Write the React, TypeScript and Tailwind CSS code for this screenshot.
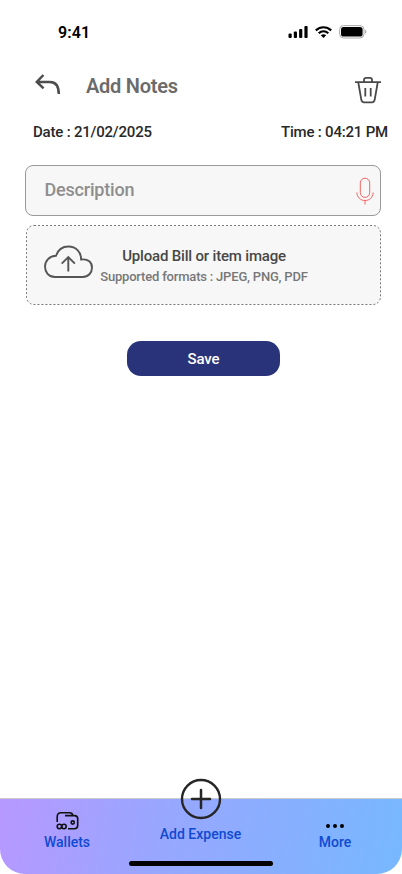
import React from "react";

function StatusBar() {
  return (
    <div className="flex h-16 items-center justify-between pl-[58px] pr-[35px] text-black">
      <span className="pt-px text-base font-semibold leading-5 tracking-[0.15px]">9:41</span>
      <div className="flex items-center">
        <svg width="20" height="14" viewBox="0 0 20 14" fill="currentColor">
          <rect x="0.5" y="8.5" width="3.2" height="4.5" rx="1" />
          <rect x="5.8" y="6.5" width="3.2" height="6.5" rx="1" />
          <rect x="11.1" y="4" width="3.2" height="9" rx="1" />
          <rect x="16.4" y="1" width="3.2" height="12" rx="1" />
        </svg>
        <svg className="ml-[7px]" width="17" height="13" viewBox="0 0 17 13" fill="none" stroke="currentColor" strokeWidth="2.2">
          <path d="M.8 4.4c4.5-4.2 10.9-4.2 15.4 0" />
          <path d="M3.7 7.3c2.8-2.6 6.8-2.6 9.6 0" />
          <path d="M5.8 9.2c1.7-1.3 3.7-1.3 5.4 0L8.5 12z" fill="currentColor" stroke="none" />
        </svg>
        <svg className="ml-[7px]" width="28" height="14" viewBox="0 0 28 14">
          <rect x="0.6" y="0.6" width="24.4" height="12.4" rx="4" fill="none" stroke="#aaa" />
          <rect x="2" y="2" width="21.6" height="9.6" rx="2.6" fill="#000" />
          <path d="M26.2 4.8v4c1.6-.7 1.6-3.3 0-4z" fill="#999" />
        </svg>
      </div>
    </div>
  );
}

function Header() {
  return (
    <header className="flex h-[58px] items-start pl-[34px] pr-5">
      <button className="mt-[9px]" aria-label="Back">
        <svg width="28" height="24" viewBox="0 0 28 24" fill="none" stroke="#4d4d4d" strokeWidth="2.5">
          <path d="M9.4 2 2.8 8.9l6.8 6.4M2.8 8.9h13c6 0 9 4 9 12" />
        </svg>
      </button>
      <h1 className="ml-6 mt-2 text-xl font-semibold leading-7 tracking-[-0.25px] text-[#6b6b6b]">Add Notes</h1>
      <button className="ml-auto mt-3" aria-label="Delete">
        <svg width="28" height="28" viewBox="0 0 28 28" fill="none" stroke="#4a4a4a" strokeWidth="1.8">
          <path d="M1 6.2h26M10 6V3.8c0-1.2.8-2 2-2h4c1.2 0 2 .8 2 2V6M4.3 6.5l3 17.2c.3 1.8 1.1 2.6 2.8 2.6h7.8c1.7 0 2.5-.8 2.8-2.6l3-17.2M11.3 12v8.6M16.7 12v8.6" />
        </svg>
      </button>
    </header>
  );
}

function NoteForm() {
  return (
    <main className="flex flex-1 flex-col">
      <div className="flex h-5 items-center justify-between pl-[33px] pr-[14px] text-[15px] font-medium leading-5 tracking-[-0.2px] text-[#282828]">
        <span>Date : 21/02/2025</span>
        <span>Time : 04:21 PM</span>
      </div>
      <div className="ml-[25px] mr-[21px] mt-[23px] flex h-[51px] items-center justify-between rounded-lg border border-[#999] bg-[#f7f7f7] pl-[18.5px] pr-[5px]">
        <span className="-mt-px text-lg font-medium leading-6 tracking-[-0.2px] text-[#8e8e8e]">Description</span>
        <svg width="20" height="30" viewBox="0 0 20 30" fill="none" stroke="#f16464">
          <rect x="5.3" y="2.2" width="9.4" height="19.2" rx="4.7" />
          <path d="M1.8 16.5c.4 5 3.6 8 8.2 8s7.8-3 8.2-8M10 24.5v4" />
        </svg>
      </div>
      <div className="ml-[26px] mr-[21px] mt-[9px] flex h-20">
        <svg className="shrink-0" width="355" height="80" viewBox="0 0 355 80">
          <rect x=".5" y=".5" width="354" height="79" rx="7.5" fill="#f7f7f7" stroke="#777" strokeDasharray="2 2" />
        </svg>
        <div className="-ml-[355px] flex w-[355px] shrink-0 items-start">
          <svg className="relative ml-[17px] mt-5" width="51" height="34" viewBox="0 0 51 34" fill="none" stroke="#555" strokeWidth="1.9">
            <path d="M12 32C5.5 32 2 27 2 21.5S6.5 10.7 13 10.7C15 4.8 19.3 1.5 25.4 1.5c7.5 0 12.7 5.3 12.7 13C45.5 13.5 49 17.7 49 22.5c0 5.4-3.8 9.5-9.2 9.5z" />
            <path d="M25.3 26.5V12.2M18.7 18.6l6.6-6.6 6.6 6.6" />
          </svg>
          <div className="ml-[6px] mt-[21px] flex w-[208px] flex-col items-center whitespace-nowrap">
            <span className="text-[15px] font-medium leading-5 tracking-[-0.18px] text-[#474747]">Upload Bill or item image</span>
            <span className="pt-px text-[13px] font-medium leading-5 tracking-[-0.19px] text-[#777]">Supported formats : JPEG, PNG, PDF</span>
          </div>
        </div>
      </div>
      <button className="ml-[127px] mt-9 h-[35px] w-[153px] rounded-[14px] bg-[#29337a] text-[15px] font-medium leading-5 tracking-[-0.1px] text-white">Save</button>
    </main>
  );
}

function BottomNav() {
  return (
    <nav className="relative h-[76px] rounded-b-[25px] border-t border-[#ccc] bg-[linear-gradient(100deg,#b798ff_0%,#9ba5ff_35%,#77b8ff_100%)] text-sm font-medium leading-4 text-[#104ad2]">
      <div className="grid h-full grid-cols-3">
        <a className="flex flex-col items-center pt-3">
          <svg width="23" height="19" viewBox="0 0 23 19" fill="none" stroke="#111" strokeWidth="1.6">
            <path d="M1.2 11V5.8c0-2.6 1.2-4 3.9-4h8.4c2 0 3 .7 3.2 2.6M9 4.6h9.4c2.2 0 3.3 1.1 3.3 3.2v6.8c0 2.1-1.1 3.2-3.3 3.2H12" />
            <circle cx="3.4" cy="15.5" r="2.2" />
            <circle cx="8" cy="15.5" r="2.2" />
            <circle cx="16.7" cy="11.5" r="1.6" />
          </svg>
          <span className="mt-1">Wallets</span>
        </a>
        <a className="-mt-[21px] flex flex-col items-center">
          <svg width="42" height="42" viewBox="0 0 42 42" fill="none" stroke="#262626">
            <circle cx="21" cy="21" r="19" strokeWidth="2.4" />
            <path d="M12 21h18M21 12v18" strokeWidth="2.5" strokeLinecap="round" />
          </svg>
          <span className="mt-[6px] pr-px">Add Expense</span>
        </a>
        <a className="flex flex-col items-center pt-6">
          <svg width="20" height="6" viewBox="0 0 20 6" fill="#000">
            <circle cx="3" cy="3" r="2" />
            <circle cx="10" cy="3" r="2" />
            <circle cx="17" cy="3" r="2" />
          </svg>
          <span className="mt-[5px]">More</span>
        </a>
      </div>
      <div className="absolute bottom-2 left-[129px] h-[5px] w-36 rounded-full bg-black" />
    </nav>
  );
}

export default function App() {
  return (
    <div className="flex h-[874px] w-[402px] flex-col overflow-hidden bg-white font-['Roboto',sans-serif]">
      <StatusBar />
      <Header />
      <NoteForm />
      <BottomNav />
    </div>
  );
}
